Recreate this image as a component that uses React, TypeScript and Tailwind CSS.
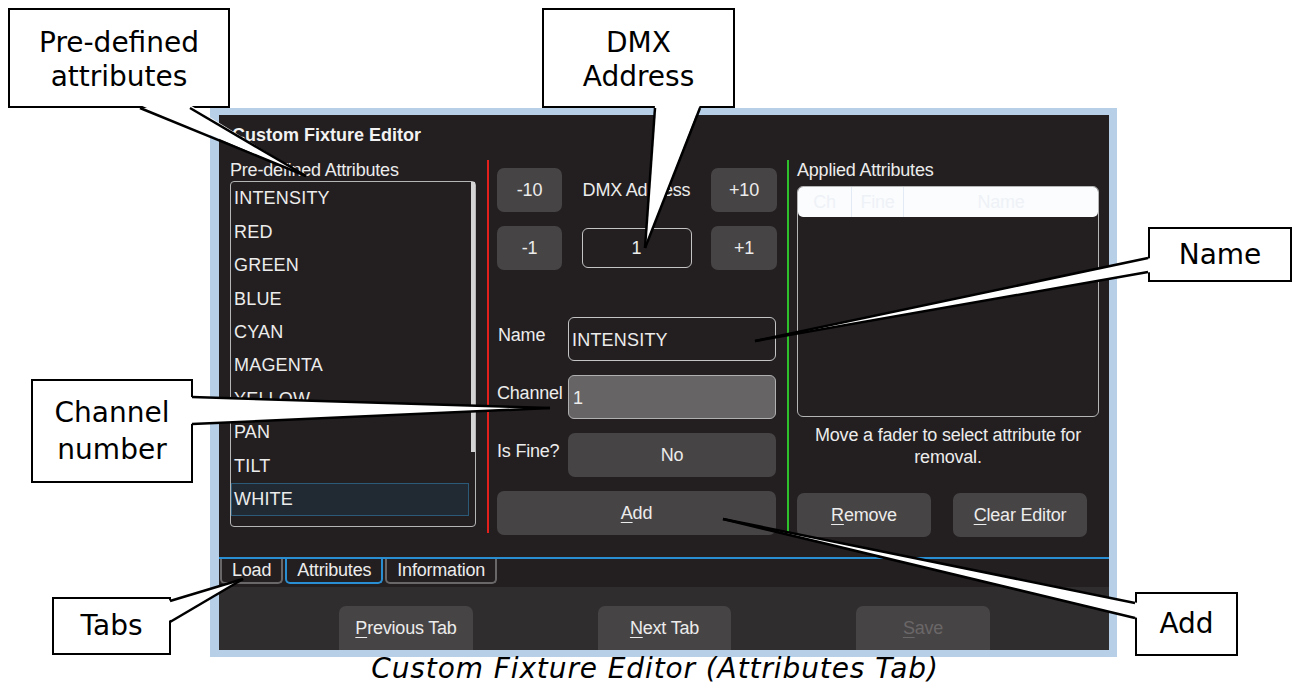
import type { ReactNode } from "react"

const attributes = ["INTENSITY", "RED", "GREEN", "BLUE", "CYAN", "MAGENTA", "YELLOW", "PAN", "TILT", "WHITE"]

function Btn({ children, className = "" }: { children: ReactNode; className?: string }) {
  return (
    <div className={"flex shrink-0 items-center justify-center rounded-[7px] bg-[#474445] text-[18px] text-[#ececec] " + className}>
      {children}
    </div>
  )
}

function Callout({ children, className = "" }: { children: ReactNode; className?: string }) {
  return (
    <div
      className={
        "absolute flex flex-col items-center justify-center border-2 border-black bg-white text-center font-['DejaVu_Sans',sans-serif] text-[28px] leading-[34px] text-black " +
        className
      }
    >
      {children}
    </div>
  )
}

function Tab({ label, active }: { label: string; active?: boolean }) {
  return (
    <div
      className={
        active
          ? "flex h-[25px] items-center rounded-b-[5px] border-x-2 border-b-2 border-[#2a8fd2] px-[10px] text-[18px] text-[#ececec]"
          : "flex h-[25px] items-center rounded-b-[5px] border-x-2 border-b-2 border-[#6a6768] px-[10px] text-[18px] text-[#ececec]"
      }
    >
      {label}
    </div>
  )
}

// pointers of the callouts: base points sit a little inside the box so the white fill hides the border
const pointers = [
  { base: [[140, 108], [190, 108]], tip: [306, 176], dx: 0, dy: -3 },
  { base: [[655, 108], [700, 108]], tip: [645, 248], dx: 0, dy: -3 },
  { base: [[1148, 258], [1148, 272]], tip: [755, 341], dx: 3, dy: 0 },
  { base: [[192, 397], [192, 424]], tip: [550, 408], dx: -3, dy: 0 },
  { base: [[170, 601], [170, 622]], tip: [243, 579], dx: -3, dy: 0 },
  { base: [[1135, 603], [1135, 618]], tip: [723, 519], dx: 3, dy: 0 },
]

export default function App() {
  return (
    <div className="relative h-[691px] w-[1292px] overflow-hidden bg-white font-['Liberation_Sans',Arial,sans-serif]">
      <div className="pl-[210px] pt-[108px]">
        <div className="flex h-[549px] w-[907px] flex-col border-b-[7px] border-l-[9px] border-r-[8px] border-t-[7px] border-[#b7d0e8] bg-[#231f20]">
          <div className="h-[30px] pl-[13px] pt-[10px] text-[18px] font-bold leading-[20px] text-[#f2f2f2]">Custom Fixture Editor</div>

          <div className="flex h-[412px] items-start pl-[11px] pt-[15px] tracking-[-0.2px] text-[#ececec]">
            {/* pre-defined attributes */}
            <div className="flex w-[246px] flex-col">
              <div className="text-[18px] leading-[20px]">Pre-defined Attributes</div>
              <div className="mt-[1px] flex h-[346px] rounded-[4px] border-[1.5px] border-[#b5b5b5]">
                <div className="flex flex-1 flex-col">
                  {attributes.map((a) => (
                    <div
                      key={a}
                      className={
                        a === "WHITE"
                          ? "flex h-[33.44px] items-center border border-[#2b5a78] bg-[#212a33] pl-[2px] text-[18px] tracking-[0.2px]"
                          : "flex h-[33.44px] items-center pl-[3px] text-[18px] tracking-[0.2px]"
                      }
                    >
                      {a}
                    </div>
                  ))}
                </div>
                <div className="ml-[2px] w-[4px]">
                  <div className="h-[270px] w-[4px] bg-[#d4d4d4]" />
                </div>
              </div>
            </div>

            <div className="ml-[11px] mr-[8px] h-[373px] w-[2px] bg-[#e3201b]" />

            {/* DMX address and attribute fields */}
            <div className="flex w-[280px] flex-col pt-[8px]">
              <div className="flex h-[44px] items-center">
                <Btn className="h-[44px] w-[65px]">-10</Btn>
                <div className="flex-1 text-center text-[18px]">DMX Address</div>
                <Btn className="h-[44px] w-[66px]">+10</Btn>
              </div>
              <div className="mt-[14px] flex h-[44px] items-center">
                <Btn className="h-[44px] w-[65px]">-1</Btn>
                <div className="flex flex-1 justify-center">
                  <div className="flex h-[40px] w-[110px] items-center justify-center rounded-[6px] border-[1.5px] border-[#c4c4c4] text-[18px]">1</div>
                </div>
                <Btn className="h-[44px] w-[66px]">+1</Btn>
              </div>

              <div className="mt-[47px] flex h-[44px]">
                <div className="w-[71px] pl-[1px] pt-[8px] text-[18px] leading-[20px]">Name</div>
                <div className="flex h-[44px] w-[208px] items-center rounded-[6px] border-[1.5px] border-[#c4c4c4] pl-[3px] pt-[2px] text-[18px] tracking-[0.2px]">INTENSITY</div>
              </div>
              <div className="mt-[14px] flex h-[44px]">
                <div className="w-[71px] pt-[8px] text-[18px] leading-[20px]">Channel</div>
                <div className="flex h-[44px] w-[208px] items-center rounded-[6px] border-[1.5px] border-[#b0b0b0] bg-[#666465] pl-[4px] pt-[3px] text-[18px]">1</div>
              </div>
              <div className="mt-[14px] flex h-[44px]">
                <div className="w-[71px] pt-[8px] text-[18px] leading-[20px]">Is Fine?</div>
                <Btn className="h-[44px] w-[208px]">No</Btn>
              </div>
              <Btn className="mt-[14px] h-[44px] w-[279px]">
                <span>
                  <span className="underline underline-offset-[3px]">A</span>dd
                </span>
              </Btn>
            </div>

            <div className="ml-[10px] mr-[8px] h-[373px] w-[2px] bg-[#2fc12b]" />

            {/* applied attributes */}
            <div className="flex w-[302px] flex-col">
              <div className="text-[18px] leading-[20px]">Applied Attributes</div>
              <div className="mt-[6px] h-[231px] rounded-[6px] border-[1.5px] border-[#b5b5b5]">
                <div className="flex h-[30px] rounded-[5px] bg-[#fbfcfe] text-[18px] text-[#eef2f7]">
                  <div className="flex w-[54px] items-center justify-center border-r border-[#e2ebf5]">Ch</div>
                  <div className="flex w-[52px] items-center justify-center border-r border-[#e2ebf5]">Fine</div>
                  <div className="flex flex-1 items-center justify-center">Name</div>
                </div>
              </div>
              <div className="mt-[7px] text-center text-[18px] leading-[22px]">
                Move a fader to select attribute for
                <br />
                removal.
              </div>
              <div className="mt-[25px] flex gap-[22px]">
                <Btn className="h-[44px] w-[134px]">
                  <span>
                    <span className="underline underline-offset-[3px]">R</span>emove
                  </span>
                </Btn>
                <Btn className="h-[44px] w-[134px]">
                  <span>
                    <span className="underline underline-offset-[3px]">C</span>lear Editor
                  </span>
                </Btn>
              </div>
            </div>
          </div>

          <div className="h-[2px] bg-[#2a8fd2]" />
          <div className="flex h-[25px] gap-[2px] pl-[1px] tracking-[-0.2px]">
            <Tab label="Load" />
            <Tab label="Attributes" active />
            <Tab label="Information" />
          </div>
          <div className="mt-[3px] flex flex-1 gap-[125px] overflow-hidden bg-[#302d2e] pl-[120px] pt-[19px] tracking-[-0.2px]">
            <Btn className="h-[44px] w-[134px] rounded-b-none">
              <span>
                <span className="underline underline-offset-[3px]">P</span>revious Tab
              </span>
            </Btn>
            <Btn className="h-[44px] w-[133px] rounded-b-none">
              <span>
                <span className="underline underline-offset-[3px]">N</span>ext Tab
              </span>
            </Btn>
            <Btn className="h-[44px] w-[134px] rounded-b-none">
              <span className="text-[#6a6768]">
                <span className="underline underline-offset-[3px]">S</span>ave
              </span>
            </Btn>
          </div>
        </div>
      </div>

      <p className="-mt-[4px] pl-[18px] text-center font-['DejaVu_Sans',sans-serif] text-[28px] italic leading-[31px] tracking-[0.9px] text-black">
        Custom Fixture Editor (Attributes Tab)
      </p>

      <Callout className="left-[8px] top-[8px] h-[100px] w-[222px] pt-[3px]">
        <span>Pre-defined</span>
        <span>attributes</span>
      </Callout>
      <Callout className="left-[542px] top-[8px] h-[100px] w-[193px] pt-[3px]">
        <span>DMX</span>
        <span>Address</span>
      </Callout>
      <Callout className="left-[1148px] top-[227px] h-[55px] w-[144px]">Name</Callout>
      <Callout className="left-[31px] top-[379px] h-[104px] w-[162px] leading-[37px]">
        <span>Channel</span>
        <span>number</span>
      </Callout>
      <Callout className="left-[52px] top-[597px] h-[58px] w-[119px]">Tabs</Callout>
      <Callout className="left-[1135px] top-[592px] h-[64px] w-[103px]">Add</Callout>

      <svg className="pointer-events-none absolute left-0 top-0" width="1292" height="691">
        {pointers.map((p, i) => {
          const [a, b] = p.base
          const [tx, ty] = p.tip
          return (
            <g key={i}>
              <polygon
                points={`${a[0] + p.dx},${a[1] + p.dy} ${b[0] + p.dx},${b[1] + p.dy} ${tx},${ty}`}
                fill="white"
              />
              <line x1={a[0]} y1={a[1]} x2={tx} y2={ty} stroke="black" strokeWidth="2.5" />
              <line x1={b[0]} y1={b[1]} x2={tx} y2={ty} stroke="black" strokeWidth="2.5" />
            </g>
          )
        })}
      </svg>
    </div>
  )
}
